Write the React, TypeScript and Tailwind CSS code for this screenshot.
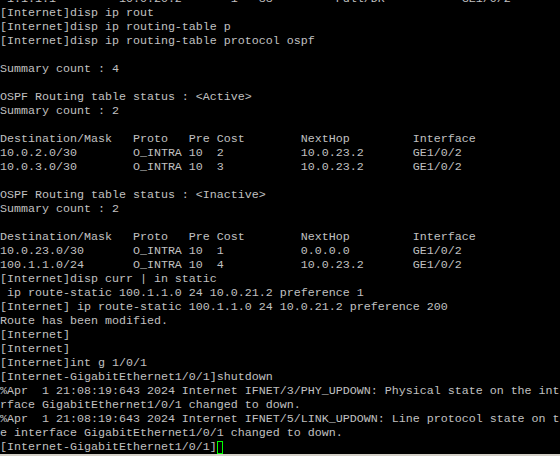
import React from "react";

const lines: string[] = [
  " 1.1.1.1         10.0.20.2       1   33         Full/DR           GE1/0/2",
  "[Internet]disp ip rout",
  "[Internet]disp ip routing-table p",
  "[Internet]disp ip routing-table protocol ospf",
  "",
  "Summary count : 4",
  "",
  "OSPF Routing table status : <Active>",
  "Summary count : 2",
  "",
  "Destination/Mask   Proto   Pre Cost        NextHop         Interface",
  "10.0.2.0/30        O_INTRA 10  2           10.0.23.2       GE1/0/2",
  "10.0.3.0/30        O_INTRA 10  3           10.0.23.2       GE1/0/2",
  "",
  "OSPF Routing table status : <Inactive>",
  "Summary count : 2",
  "",
  "Destination/Mask   Proto   Pre Cost        NextHop         Interface",
  "10.0.23.0/30       O_INTRA 10  1           0.0.0.0         GE1/0/2",
  "100.1.1.0/24       O_INTRA 10  4           10.0.23.2       GE1/0/2",
  "[Internet]disp curr | in static",
  " ip route-static 100.1.1.0 24 10.0.21.2 preference 1",
  "[Internet] ip route-static 100.1.1.0 24 10.0.21.2 preference 200",
  "Route has been modified.",
  "[Internet]",
  "[Internet]",
  "[Internet]int g 1/0/1",
  "[Internet-GigabitEthernet1/0/1]shutdown",
  "%Apr  1 21:08:19:643 2024 Internet IFNET/3/PHY_UPDOWN: Physical state on the int",
  "rface GigabitEthernet1/0/1 changed to down.",
  "%Apr  1 21:08:19:643 2024 Internet IFNET/5/LINK_UPDOWN: Line protocol state on th",
  "e interface GigabitEthernet1/0/1 changed to down.",
];

export default function App() {
  return (
    <div className="w-[560px] h-[456px] bg-black overflow-hidden flex flex-col">
      <div
        className="flex-1 overflow-hidden text-[#c0c0c0] text-[11.67px] leading-[14px] whitespace-pre"
        style={{ fontFamily: '"Liberation Mono", "Courier New", monospace' }}
      >
        <div className="-mt-[8px]">
          {lines.map((l, i) => (
            <div key={i} className="h-[14px]">
              {l}
            </div>
          ))}
          <div className="h-[14px] flex items-center">
            <span>[Internet-GigabitEthernet1/0/1]</span>
            <span className="inline-block w-[6px] h-[13px] border border-[#00ff00] mt-[1px]" />
          </div>
        </div>
      </div>
      <div className="h-[2px] bg-[#d4d0c8]" />
    </div>
  );
}
